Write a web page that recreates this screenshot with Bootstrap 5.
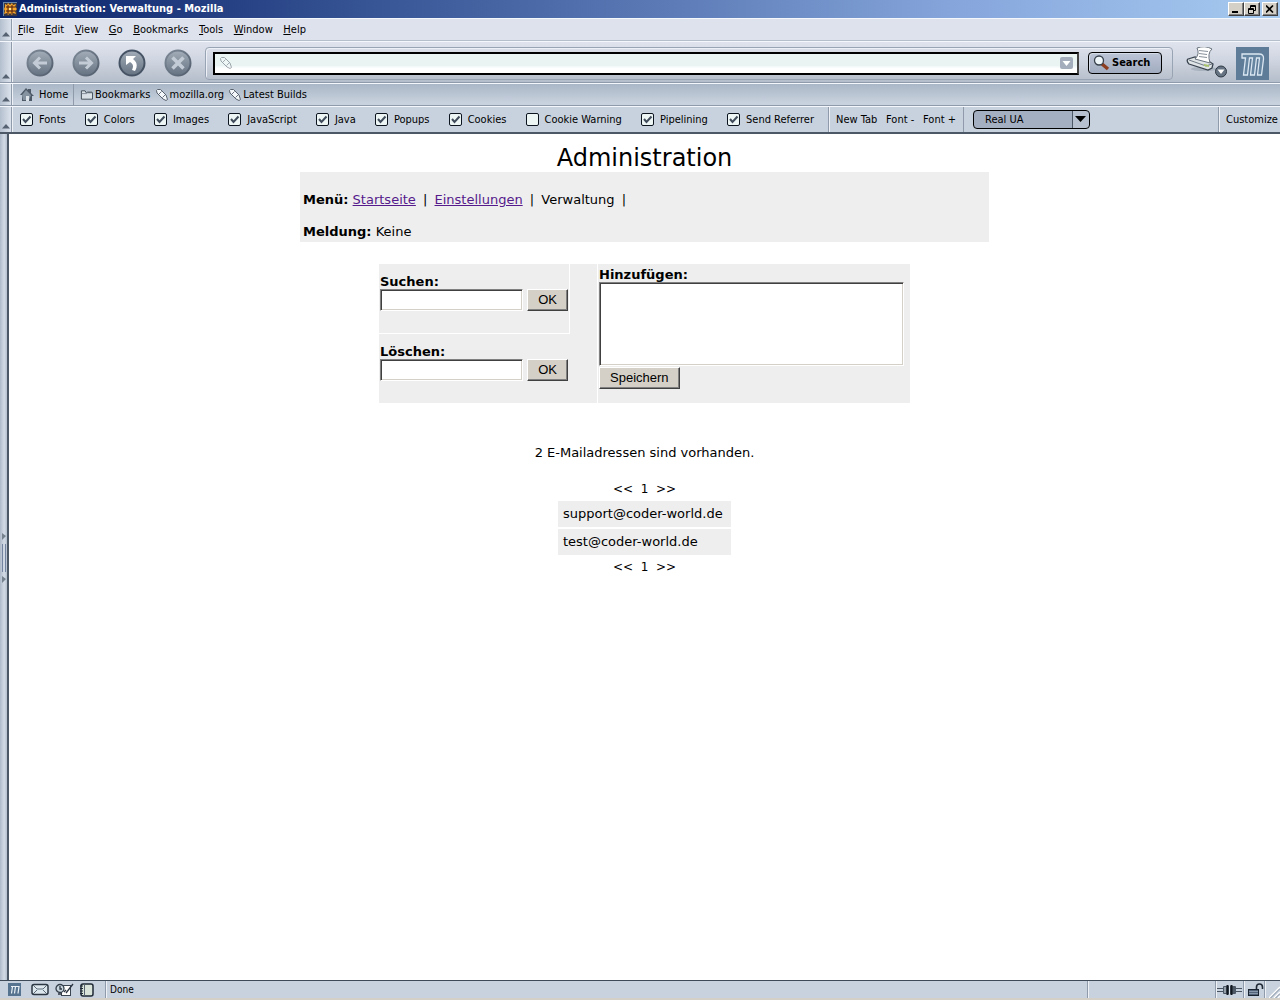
<!DOCTYPE html>
<html lang="de">
<head>
<meta charset="utf-8">
<meta name="viewport" content="width=device-width, initial-scale=1">
<title>Administration: Verwaltung - Mozilla</title>
<link href="https://cdn.jsdelivr.net/npm/bootstrap@5.3.0/dist/css/bootstrap.min.css" rel="stylesheet">
<style>
  :root { --ui: "DejaVu Sans Condensed", "DejaVu Sans", sans-serif; --edge: #8f9bab; --metal: #c8d2de; }
  body { font-family: "DejaVu Sans", sans-serif; font-size: 13px; line-height: 16px; color: #000; background: #fff; }
  svg { display: block; flex: none; }
  .chrome { font-family: var(--ui); font-size: 11px; line-height: 14px; }
  .chrome a { color: #000; text-decoration: none; }
  .chrome button { background: none; border: 0; padding: 0; color: #000; }
  .titlebar { height: 18px; padding: 0 2px 0 3px; background: linear-gradient(90deg, #0a246a, #5877b3 50%, #86a6dc 75%, #a6caf0); color: #fff; font-weight: bold; gap: 2px; }
  .chrome .winbtn { width: 16px; height: 14px; background: #d4d0c8; border: 1px solid; border-color: #fff #404040 #404040 #fff; box-shadow: inset -1px -1px #808080; display: flex; align-items: center; justify-content: center; }
  .winpair { width: 32px; }
  .strip { border-top: 1px solid #f4f7fb; border-bottom: 1px solid var(--edge); }
  .grip { width: 12px; flex: none; border-right: 1px solid var(--edge); background: linear-gradient(90deg, #b4bfce, #dbe2ec); padding: 0 0 3px 2px; }
  .barrow { box-shadow: inset 1px 0 #eef2f7; }
  .menubar { height: 23px; background: #dee2ed; border-bottom-color: #b5bfcc; }
  .menubar .barrow { padding: 1px 0 0 6px; }
  .menus { width: 288px; }
  .navbar-strip { height: 42px; background: linear-gradient(#dfe3ee, #d0d6e1 45%, #b4bdca); }
  .navbar-strip .barrow { padding-top: 2px; }
  .round-set { gap: 18px; padding-left: 14px; }
  .urlframe { height: 33px; border: 1px solid #98a3b3; border-radius: 4px; box-shadow: inset 1px 1px #edf1f7; padding: 0 10px 0 7px; margin-left: 13px; }
  .urlwrap { height: 23px; border: 2px solid #000; border-right-color: #444; background: linear-gradient(#e9f4f3 60%, #fff 75%); padding: 0 4px 0 5px; }
  .urlwrap input { border: 0; background: transparent; outline: 0; min-width: 0; height: 18px; }
  .chrome .searchbtn { width: 74px; height: 22px; margin-left: 9px; border: 1px solid #000; border-radius: 4px; background: linear-gradient(#bcc5d6, #a2acc0); box-shadow: inset 1px 1px #d5dce8; font-weight: bold; padding-left: 4px; gap: 2px; }
  .sidepics { width: 107px; padding-right: 11px; }
  .personal { height: 23px; background: linear-gradient(#aab7c6, #c8d1de 90%); }
  .personal .homebox { width: 62px; border-right: 1px solid var(--edge); padding-left: 8px; gap: 5px; }
  .personal .marks { width: 233px; padding-left: 6px; }
  .marks a { gap: 2px; }
  .prefs { height: 28px; background: var(--metal); border-bottom: 2px solid #4d5866; }
  .ticks { width: 817px; padding: 0 14px 0 8px; border-right: 1px solid var(--edge); }
  .ticks label { gap: 6px; }
  .ticks .form-check-input { width: 13px; height: 13px; margin: 0; border: 1px solid #0c1420; border-radius: 2px; background-color: #edf5f5; background-size: 11px 11px; box-shadow: none; flex: none; }
  .ticks .form-check-input:checked { background-image: url("data:image/svg+xml,%3Csvg xmlns='http://www.w3.org/2000/svg' viewBox='0 0 11 11'%3E%3Cpath d='M2 5l2.5 3L9.500 2.500' fill='none' stroke='%23414d5c' stroke-width='2'/%3E%3C/svg%3E"); }
  .fontlinks { width: 135px; padding: 0 7px; border-right: 1px solid var(--edge); box-shadow: inset 1px 0 #eef2f7; }
  .uabox { margin-left: 9px; width: 117px; height: 19px; }
  .uabox select { width: 100%; height: 19px; appearance: none; border: 1px solid #000; border-radius: 4px; color: #000; padding: 0 0 0 11px; background: linear-gradient(90deg, #a5afc2 98px, #4d5866 98px, #4d5866 99px, #b6c0cf 99px); }
  .uabox svg { right: 4px; top: 6px; pointer-events: none; }
  .customize { width: 62px; padding-left: 7px; border-left: 1px solid var(--edge); box-shadow: inset 1px 0 #eef2f7; }
  .splitter { width: 9px; flex: none; background: linear-gradient(90deg, #aeb9c9, #d3dbe6 60%, #b5c0ce); border-right: 2px solid #4d5866; padding-top: 399px; }
  .sheet { padding-top: 10px; }
  .sheet h1 { font-size: 24px; line-height: 28px; margin: 0; font-weight: normal; }
  .notice { width: 689px; max-width: 100%; padding: 20px 3px 2px; background: #eee; }
  .notice a { color: #551a8b; }
  .notice p { margin: 0; }
  .notice i { font-style: normal; margin: 0 3px; }
  .forms { width: 531px; max-width: 100%; margin-top: 22px; gap: 1px; }
  .forms .lefthalf { width: 218px; background: #eee; }
  .forms .find { width: 191px; height: 70px; border: solid #fff; border-width: 0 1px 1px 0; }
  .forms .find + .find { height: 69px; border-color: #eee; }
  .forms form { padding: 9px 1px 0; }
  .forms .addhalf { background: #eee; height: 139px; padding: 2px 1px 0; }
  .sheet label { font-weight: bold; height: 16px; line-height: 18px; display: block; }
  .field { border: 1px solid; border-color: #808080 #fff #fff #808080; box-shadow: inset 1px 1px #404040, inset -1px -1px #d4d0c8; background: #fff; border-radius: 0; display: block; resize: none; }
  .line-in { width: 143px; height: 22px; }
  .area-in { width: 305px; height: 84px; margin-bottom: 1px; }
  .grey-btn { font-family: "Liberation Sans", sans-serif; font-size: 13px; line-height: 16px; height: 22px; background: #d4d0c8; border: 1px solid; border-color: #fff #404040 #404040 #fff; box-shadow: inset -1px -1px #808080; padding: 0 10px; display: block; }
  .count { margin: 42px 0 18px; }
  .mails { border-collapse: separate; border-spacing: 0 2px; width: 173px; }
  .mails td { background: #eee; padding: 5px; height: 26px; }
  .pager { line-height: 20px; font-size: 12px; }
  .status { height: 20px; background: var(--metal); border-top: 1px solid #3f4a58; border-bottom: 2px solid #d4d0c8; font-size: 10px; }
  .status .cellbox { border-right: 1px solid var(--edge); box-shadow: 1px 0 #eef2f7; }
  .status .tools { width: 106px; padding-left: 8px; gap: 6px; }
  .status .progress-cell { width: 128px; }
</style>
</head>
<body>
<svg width="0" height="0" class="position-absolute" aria-hidden="true">
  <defs>
    <linearGradient id="steel" x1="0" y1="0" x2="0" y2="1"><stop offset="0" stop-color="#a3adb9"/><stop offset="1" stop-color="#657281"/></linearGradient>
    <linearGradient id="ring" x1="0" y1="0" x2="1" y2="1"><stop offset="0" stop-color="#7d8997"/><stop offset="1" stop-color="#525e6d"/></linearGradient>
    <symbol id="tri" viewBox="0 0 8 5"><path d="M0 4.500L4 0l4 4.500z" fill="#566272"/></symbol>
    <symbol id="tag" viewBox="0 0 12 12"><path d="M.500 1.500l1-1h3L10 6l1.500 4.500L10 11.500 7 10 1 4z" fill="#f4f8fa" stroke="#59636f"/><path d="M3 5l2.500-2.500M6.500 8.500L9 6" stroke="#6b7480" fill="none"/></symbol>
    <symbol id="emblem" viewBox="0 0 33 33"><rect width="33" height="33" fill="#5e7c98"/><path d="M6 7h17q5 0 4.500 5L25.500 28h-4l2-17h-3l-2 17h-4l2-17h-3l-2 17h-4l2-17H6z" fill="#6685a1" stroke="#dbe7f2" stroke-width="1.300"/></symbol>
    <symbol id="emblem-small" viewBox="0 0 13 13"><rect width="13" height="13" fill="#56748f"/><path d="M3 3.500h8L10 10.500M4.500 3.500l-1 7M7.500 3.500l-1 7" fill="none" stroke="#eaf2f8" stroke-width="1.200"/></symbol>
  </defs>
</svg>
<div class="d-flex flex-column min-vh-100">
  <header class="chrome">
    <div class="titlebar d-flex align-items-center">
      <svg width="14" height="14" viewBox="0 0 14 14"><rect width="14" height="14" fill="#3b3740"/><path d="M0 0h14v1H1v13H0z" fill="#6686a8"/><path d="M2 2l2 1 1-2 2 2 2-2 1 2 3-1-1 3 2 2-2 2 1 3-3-1-1 2-2-2-2 2-1-2-3 1 1-3-1-2 1-2z" fill="#f5a52a"/><path d="M5 3v9M9 3v9M3 5h9M3 9h9" stroke="#4a1c12"/><rect x="6" y="6" width="2" height="2" fill="#ffe98c"/></svg>
      <span class="me-auto text-nowrap">Administration: Verwaltung - Mozilla</span>
      <div class="winpair d-flex">
        <button class="winbtn" aria-label="Minimieren"><svg width="8" height="8"><path d="M0 6h6v2H0z"/></svg></button>
        <button class="winbtn" aria-label="Wiederherstellen"><svg width="9" height="9"><path d="M2.500 3V.500h5v5H6M2 1.500h6M.500 3.500h5v5h-5zM0 4.500h6" fill="none" stroke="#000"/></svg></button>
      </div>
      <button class="winbtn" aria-label="Schließen"><svg width="8" height="8"><path d="M0 .500l7 7M7 .500l-7 7" stroke="#000" stroke-width="1.600"/></svg></button>
    </div>
    <div class="menubar strip d-flex">
      <div class="grip d-flex align-items-end"><svg width="8" height="5"><use href="#tri"/></svg></div>
      <div class="barrow flex-grow-1 d-flex align-items-center">
        <nav class="menus d-flex justify-content-between">
          <a href="#"><u>F</u>ile</a><a href="#"><u>E</u>dit</a><a href="#"><u>V</u>iew</a><a href="#"><u>G</u>o</a><a href="#"><u>B</u>ookmarks</a><a href="#"><u>T</u>ools</a><a href="#"><u>W</u>indow</a><a href="#"><u>H</u>elp</a>
        </nav>
      </div>
    </div>
    <div class="navbar-strip strip d-flex">
      <div class="grip d-flex align-items-end"><svg width="8" height="5"><use href="#tri"/></svg></div>
      <div class="barrow flex-grow-1 d-flex align-items-center">
        <div class="round-set d-flex">
          <button aria-label="Back"><svg width="28" height="28"><circle cx="14" cy="14" r="12.500" fill="url(#steel)" stroke="url(#ring)" stroke-width="2"/><path d="M21 14H9M14 8.500L8.500 14l5.500 5.500" fill="none" stroke="#c3ccd6" stroke-width="3"/></svg></button>
          <button aria-label="Forward"><svg width="28" height="28"><circle cx="14" cy="14" r="12.500" fill="url(#steel)" stroke="url(#ring)" stroke-width="2"/><path d="M7 14h12M14 8.500l5.500 5.500-5.500 5.500" fill="none" stroke="#c3ccd6" stroke-width="3"/></svg></button>
          <button aria-label="Reload"><svg width="28" height="28"><circle cx="14" cy="14" r="12.500" fill="url(#steel)" stroke="#465364" stroke-width="2"/><path d="M8 7h10l-3 3c4 3 5 7 2 12l-3-1c2-4 1-6-2-8l-4 3z" fill="#fff"/></svg></button>
          <button aria-label="Stop"><svg width="28" height="28"><circle cx="14" cy="14" r="12.500" fill="url(#steel)" stroke="url(#ring)" stroke-width="2"/><path d="M8.500 8.500l11 11M19.500 8.500l-11 11" stroke="#c3ccd6" stroke-width="3.500"/></svg></button>
        </div>
        <div class="urlframe flex-grow-1 d-flex align-items-center">
          <div class="urlwrap flex-grow-1 d-flex align-items-center">
            <svg width="12" height="12" opacity=".55"><use href="#tag"/></svg>
            <input type="text" class="flex-grow-1" aria-label="Adresse">
            <svg width="13" height="12"><rect width="13" height="12" rx="2" fill="#a3adbb"/><path d="M2.500 4h8l-4 5z" fill="#fff"/></svg>
          </div>
          <button class="searchbtn d-flex align-items-center"><svg width="17" height="16"><path d="M9 9l6 5" stroke="#8d3d20" stroke-width="3.500"/><circle cx="6" cy="5.500" r="4.500" fill="#eef6fa" stroke="#38424d" stroke-width="1.300"/></svg><span>Search</span></button>
        </div>
        <div class="sidepics d-flex justify-content-end align-items-center">
          <button class="me-2" aria-label="Print"><svg width="42" height="33" viewBox="0 0 42 33"><ellipse cx="18" cy="22" rx="13" ry="2" fill="#8e99a8" opacity=".5"/><path d="M2 12l7-2 15 5 3 2-1 4-4 2L3 17q-3-3-1-5z" fill="#dfe4e6" stroke="#3a4450" stroke-width="1.300"/><path d="M11 1q8-3 15 1-5 4-2 14l-15-4q5-5 2-11z" fill="#fff" stroke="#69737e"/><path d="M13 3.500l9 1M13 6.500l8 1M13 9.500l8 1" stroke="#87909a"/><path d="M3 13l17 6 6-2" fill="none" stroke="#6f7a86"/><path d="M18 17l5 1v2l-5-1z" fill="#a8c26b"/><circle cx="35" cy="24.500" r="5.500" fill="#667382" stroke="#303b47"/><path d="M31.500 22.500h7l-3.500 4.500z" fill="#fff"/></svg></button>
          <svg width="33" height="33"><use href="#emblem"/></svg>
        </div>
      </div>
    </div>
    <div class="personal strip d-flex">
      <div class="grip d-flex align-items-end"><svg width="8" height="5"><use href="#tri"/></svg></div>
      <div class="barrow flex-grow-1 d-flex align-items-stretch">
        <a href="#" class="homebox d-flex align-items-center"><svg width="14" height="13"><path d="M0 7L6 0l2 2V1h3v4l3 3h-2v5H2V7z" fill="#4d5967"/><path d="M2 7l4-5 5 5-2 5H3z" fill="#8592a0"/><path d="M6 8h3v5H6z" fill="#dce4ea"/></svg>Home</a>
        <nav class="marks d-flex align-items-center justify-content-between">
          <a href="#" class="d-flex align-items-center"><svg width="13" height="12" viewBox="0 0 14 12"><path d="M1.500 10.500v-9h4l1 2h7v7z" fill="#d9e0e6" stroke="#3d4853"/><path d="M2 4.500h5l1-2h5" fill="none" stroke="#7c8792"/></svg>Bookmarks</a>
          <a href="#" class="d-flex align-items-center"><svg width="12" height="12"><use href="#tag"/></svg>mozilla.org</a>
          <a href="#" class="d-flex align-items-center"><svg width="12" height="12"><use href="#tag"/></svg>Latest Builds</a>
        </nav>
      </div>
    </div>
    <div class="prefs strip d-flex">
      <div class="grip d-flex align-items-end"><svg width="8" height="5"><use href="#tri"/></svg></div>
      <div class="barrow flex-grow-1 d-flex align-items-stretch text-nowrap">
        <div class="ticks d-flex align-items-center justify-content-between">
          <label class="d-flex align-items-center"><input class="form-check-input" type="checkbox" checked>Fonts</label>
          <label class="d-flex align-items-center"><input class="form-check-input" type="checkbox" checked>Colors</label>
          <label class="d-flex align-items-center"><input class="form-check-input" type="checkbox" checked>Images</label>
          <label class="d-flex align-items-center"><input class="form-check-input" type="checkbox" checked>JavaScript</label>
          <label class="d-flex align-items-center"><input class="form-check-input" type="checkbox" checked>Java</label>
          <label class="d-flex align-items-center"><input class="form-check-input" type="checkbox" checked>Popups</label>
          <label class="d-flex align-items-center"><input class="form-check-input" type="checkbox" checked>Cookies</label>
          <label class="d-flex align-items-center"><input class="form-check-input" type="checkbox">Cookie Warning</label>
          <label class="d-flex align-items-center"><input class="form-check-input" type="checkbox" checked>Pipelining</label>
          <label class="d-flex align-items-center"><input class="form-check-input" type="checkbox" checked>Send Referrer</label>
        </div>
        <div class="fontlinks d-flex align-items-center justify-content-between"><button>New Tab</button><button>Font -</button><button>Font +</button></div>
        <div class="uabox position-relative align-self-center me-auto">
          <select aria-label="User Agent"><option>Real UA</option></select>
          <svg class="position-absolute" width="11" height="6"><path d="M0 0h11L5.500 6z"/></svg>
        </div>
        <div class="customize d-flex align-items-center"><button>Customize</button></div>
      </div>
    </div>
  </header>

  <div class="d-flex flex-grow-1">
    <div class="splitter d-flex flex-column align-items-center">
      <svg width="6" height="50" viewBox="0 0 6 50"><path d="M1 0l4 3-4 4zM1 43l4 3-4 4z" fill="#77828f"/><path d="M1.500 11v28M4.500 11v28" stroke="#7384a0"/></svg>
    </div>
    <main class="sheet flex-grow-1 d-flex flex-column align-items-center">
      <h1>Administration</h1>
      <section class="notice">
        <p><b>Menü:</b> <a href="#">Startseite</a> <i>|</i> <a href="#">Einstellungen</a> <i>|</i> Verwaltung <i>|</i></p>
        <p class="pt-3"><b>Meldung:</b> Keine</p>
      </section>
      <section class="forms d-flex">
        <div class="lefthalf">
          <form class="find"><label for="suchen">Suchen:</label><div class="d-flex justify-content-between"><input id="suchen" type="text" class="field line-in"><button type="button" class="grey-btn">OK</button></div></form>
          <form class="find"><label for="loeschen">Löschen:</label><div class="d-flex justify-content-between"><input id="loeschen" type="text" class="field line-in"><button type="button" class="grey-btn">OK</button></div></form>
        </div>
        <form class="addhalf flex-grow-1"><label for="neu">Hinzufügen:</label><textarea id="neu" class="field area-in"></textarea><button type="button" class="grey-btn">Speichern</button></form>
      </section>
      <p class="count">2 E-Mailadressen sind vorhanden.</p>
      <div class="pager">&lt;&lt;&nbsp; 1 &nbsp;&gt;&gt;</div>
      <table class="mails"><tbody><tr><td>support@coder-world.de</td></tr><tr><td>test@coder-world.de</td></tr></tbody></table>
      <div class="pager">&lt;&lt;&nbsp; 1 &nbsp;&gt;&gt;</div>
    </main>
  </div>

  <footer class="chrome status d-flex align-items-stretch">
    <div class="tools cellbox d-flex align-items-center">
      <svg width="13" height="13"><use href="#emblem-small"/></svg>
      <svg width="18" height="13" class="ms-1"><rect x="1" y="1.500" width="16" height="10" rx="2" fill="#dce6ed" stroke="#2c3744" stroke-width="1.500"/><path d="M2 2l4 4h6l4-4M2 11l4-4M16 11l-4-4" fill="none" stroke="#5d6a78"/></svg>
      <svg width="19" height="14"><rect x="6.500" y="2.500" width="9" height="10" fill="#fff" stroke="#3b4652"/><circle cx="5" cy="5.500" r="4" fill="#c9d6df" stroke="#333e4a" stroke-width="1.300"/><path d="M5 3v3h2M3 11h4M9 9l2-2M18 1l-7 9" fill="none" stroke="#2c3642" stroke-width="1.300"/></svg>
      <svg width="14" height="14"><rect x="1" y="1" width="12" height="12" rx="2" fill="#d9e3d9" stroke="#1f2a36" stroke-width="1.500"/><path d="M4.500 1v12" stroke="#56626e"/><path d="M0 3h3M0 5.500h3M0 8h3M0 10.500h3" stroke="#1f2a36"/></svg>
    </div>
    <div class="cellbox flex-grow-1 d-flex align-items-center ps-1">Done</div>
    <div class="cellbox progress-cell"></div>
    <div class="cellbox d-flex align-items-center"><svg width="27" height="12"><path d="M1 4.500h6M1 7.500h6M20 4.500h6M20 7.500h6" stroke="#46525f"/><rect x="7" y="2" width="13" height="8" rx="1" fill="#4d5967"/><path d="M11.500 1v10M15.500 1v10" stroke="#10171f" stroke-width="2"/><path d="M13.500 2v8M9 3v6" stroke="#dce5ec"/></svg></div>
    <div class="cellbox d-flex align-items-center ps-1"><svg width="16" height="13"><rect x=".500" y="6.500" width="10" height="6" fill="#52637a" stroke="#1a2430"/><path d="M1 8.500h9M1 10.500h9" stroke="#8798aa"/><path d="M8.500 6V4q0-3 3-3t3 3v2" fill="none" stroke="#202a36" stroke-width="1.600"/></svg></div>
    <div class="d-flex align-items-end ps-1"><svg width="11" height="14"><path d="M0 14L11 3M5 14l6-6M9 14l2-2" stroke="#fff" stroke-width="1.500"/><path d="M1.500 14L11 4.500M6.500 14L11 9.500" stroke="#8390a0"/></svg></div>
  </footer>
</div>
<script src="https://cdn.jsdelivr.net/npm/bootstrap@5.3.0/dist/js/bootstrap.bundle.min.js"></script>
</body>
</html>
